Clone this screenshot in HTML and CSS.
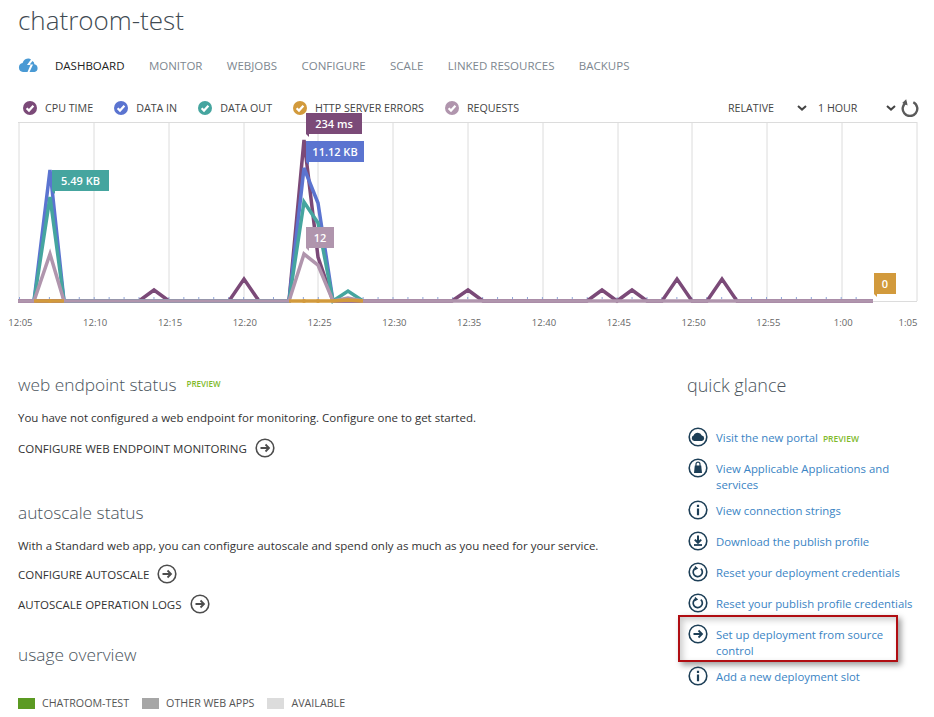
FILE: index.html
```html
<!DOCTYPE html>
<html lang="en">
  <head>
    <meta charset="UTF-8" />
    <title>chatroom-test</title>
    <link rel="stylesheet" href="styles.css">
  </head>
  <body>
    <svg width="0" height="0" class="defs">
      <symbol id="i-arrow" viewBox="0 0 20 20">
        <circle cx="10" cy="10" r="8.8" fill="none" stroke="currentColor" stroke-width="1.6"/>
        <path d="M5.5 10H14M10.5 6.5L14 10L10.5 13.5" fill="none" stroke="currentColor" stroke-width="1.8"/>
      </symbol>
      <symbol id="i-check" viewBox="0 0 14 14">
        <path d="M3.6 7.2L6 9.6L10.4 4.8" fill="none" stroke="#fff" stroke-width="2.2"/>
      </symbol>
      <symbol id="i-info" viewBox="0 0 20 20">
        <circle cx="10" cy="10" r="8.8" fill="none" stroke="currentColor" stroke-width="1.6"/>
        <path d="M8.9 4.8h2.2v2.2H8.9zM8.9 8.4h2.2v6.8H8.9z" fill="currentColor"/>
      </symbol>
      <symbol id="i-reset" viewBox="0 0 20 20">
        <circle cx="10" cy="10" r="8.8" fill="none" stroke="currentColor" stroke-width="1.6"/>
        <path d="M12.8 6.6A4.6 4.6 0 1 1 7.6 6" fill="none" stroke="currentColor" stroke-width="1.7"/>
        <path d="M7 3.8L10.2 6.6L6.4 8.4z" fill="currentColor"/>
      </symbol>
    </svg>

    <h1 class="title">chatroom-test</h1>

    <nav class="tabs">
      <svg class="cloud" width="21" height="16" viewBox="0 0 21 16">
        <path d="M5 15A4.5 4.5 0 0 1 4.6 6.1A5.5 5.5 0 0 1 13 2.4L9 8H12.5L9.5 15zM14.5 4A4 4 0 0 1 16.4 7.2A4 4 0 0 1 16.5 15H11.5L15 7.5H11.7z" fill="#4a9ad4"/>
      </svg>
      <a class="tab active">DASHBOARD</a>
      <a class="tab">MONITOR</a>
      <a class="tab">WEBJOBS</a>
      <a class="tab">CONFIGURE</a>
      <a class="tab">SCALE</a>
      <a class="tab">LINKED RESOURCES</a>
      <a class="tab">BACKUPS</a>
    </nav>

    <div class="legend">
      <span class="metric"><svg class="dot cpu"><use href="#i-check"/></svg>CPU TIME</span>
      <span class="metric"><svg class="dot data-in"><use href="#i-check"/></svg>DATA IN</span>
      <span class="metric"><svg class="dot data-out"><use href="#i-check"/></svg>DATA OUT</span>
      <span class="metric"><svg class="dot errors"><use href="#i-check"/></svg>HTTP SERVER ERRORS</span>
      <span class="metric"><svg class="dot requests"><use href="#i-check"/></svg>REQUESTS</span>
      <div class="range">
        <span class="select select-relative">RELATIVE<svg class="chev" viewBox="0 0 10 6"><path d="M1 1L5 4.6L9 1" fill="none" stroke="#444" stroke-width="2"/></svg></span>
        <span class="select select-hour">1 HOUR<svg class="chev" viewBox="0 0 10 6"><path d="M1 1L5 4.6L9 1" fill="none" stroke="#444" stroke-width="2"/></svg></span>
        <svg class="refresh" width="18" height="18" viewBox="0 0 18 18">
          <path d="M12.3 3.2A7.3 7.3 0 1 1 5.7 3.2" fill="none" stroke="#5a5a5a" stroke-width="2.4"/>
          <path d="M5.2 0.2L6.6 6.4L1.2 4z" fill="#5a5a5a"/>
        </svg>
      </div>
    </div>

    <div class="chart">
      <svg class="plot" width="900" height="184" viewBox="0 0 900 184">
        <path d="M1 0V179M76 0V179M151 0V179M226 0V179M300 0V179M375 0V179M450 0V179M525 0V179M600 0V179M674 0V179M749 0V179M824 0V179M899 0V179M0 .5H899M0 179.5H899" stroke="#dcdcdc" fill="none"/>
        <line class="ticks" x1="1" y1="176" x2="840" y2="176"/>
        <polyline class="line l-cpu" points="0,179 121,179 136,168 151,179 211,179 226,157 241,179 271,179 286,18 300,135 315,179 434,179 450,168 465,179 569,179 584,168 599,179 614,168 629,179 644,179 659,157 674,179 689,179 704,157 719,179 855,179"/>
        <polyline class="line l-in" points="16,179 32,48 46,179 271,179 286,46 300,81 315,179"/>
        <polyline class="line l-out" points="16,179 32,75 46,179 271,179 286,80 300,101 315,179 330,169 345,179"/>
        <polyline class="line l-req" points="0,179 16,179 32,132 46,179 271,179 286,132 300,143 315,179 330,176 345,179 855,179"/>
        <polyline class="line l-err" points="16,179 46,179"/>
        <polyline class="line l-err" points="271,179 315,179 330,178 345,179"/>
        <circle class="err-dot" cx="32" cy="179" r="2"/>
        <circle class="err-dot" cx="286" cy="179" r="2"/>
        <circle class="err-dot" cx="300" cy="179" r="2"/>
        <circle class="err-dot" cx="330" cy="178" r="2"/>
      </svg>
      <span class="tag tag-cpu">234 ms</span>
      <span class="tag tag-in">11.12 KB</span>
      <span class="tag tag-out">5.49 KB</span>
      <span class="tag tag-req">12</span>
      <span class="tag tag-err">0</span>
    </div>

    <div class="axis">
      <span>12:05</span><span>12:10</span><span>12:15</span><span>12:20</span><span>12:25</span><span>12:30</span><span>12:35</span><span>12:40</span><span>12:45</span><span>12:50</span><span>12:55</span><span>1:00</span><span class="axis-last">1:05</span>
    </div>

    <div class="columns">
      <div class="main">
        <section class="block">
          <h2>web endpoint status<sup class="preview">PREVIEW</sup></h2>
          <p>You have not configured a web endpoint for monitoring. Configure one to get started.</p>
          <a class="action">CONFIGURE WEB ENDPOINT MONITORING<svg class="go"><use href="#i-arrow"/></svg></a>
        </section>
        <section class="block autoscale">
          <h2>autoscale status</h2>
          <p>With a Standard web app, you can configure autoscale and spend only as much as you need for your service.</p>
          <a class="action">CONFIGURE AUTOSCALE<svg class="go"><use href="#i-arrow"/></svg></a>
          <a class="action">AUTOSCALE OPERATION LOGS<svg class="go"><use href="#i-arrow"/></svg></a>
        </section>
        <section class="block usage">
          <h2>usage overview</h2>
          <div class="usage-legend">
            <span class="usage-key"><i class="swatch swatch-app"></i>CHATROOM-TEST</span>
            <span class="usage-key"><i class="swatch swatch-other"></i>OTHER WEB APPS</span>
            <span class="usage-key"><i class="swatch swatch-free"></i>AVAILABLE</span>
          </div>
        </section>
      </div>

      <aside class="glance">
        <h2>quick glance</h2>
        <ul class="links">
          <li>
            <svg class="ico" viewBox="0 0 20 20">
              <circle cx="10" cy="10" r="8.8" fill="none" stroke="currentColor" stroke-width="1.6"/>
              <path d="M6.2 14A2.8 2.8 0 0 1 5.6 8.6A4.4 4.4 0 0 1 13.8 8.5A2.8 2.8 0 0 1 14 14z" fill="currentColor"/>
            </svg>
            <a>Visit the new portal<b class="preview">PREVIEW</b></a>
          </li>
          <li>
            <svg class="ico" viewBox="0 0 20 20">
              <circle cx="10" cy="10" r="8.8" fill="none" stroke="currentColor" stroke-width="1.6"/>
              <path d="M6.8 7.5H13.2L14 15H6z" fill="currentColor"/>
              <path d="M8 8V6.2A2 2 0 0 1 12 6.2V8" fill="none" stroke="currentColor" stroke-width="1.2"/>
            </svg>
            <a>View Applicable Applications and services</a>
          </li>
          <li><svg class="ico"><use href="#i-info"/></svg><a>View connection strings</a></li>
          <li>
            <svg class="ico" viewBox="0 0 20 20">
              <circle cx="10" cy="10" r="8.8" fill="none" stroke="currentColor" stroke-width="1.6"/>
              <path d="M10 4.5V11.5M6.8 8.6L10 11.8L13.2 8.6" fill="none" stroke="currentColor" stroke-width="2"/>
              <path d="M6 14H14" stroke="currentColor" stroke-width="1.8"/>
            </svg>
            <a>Download the publish profile</a>
          </li>
          <li><svg class="ico"><use href="#i-reset"/></svg><a>Reset your deployment credentials</a></li>
          <li><svg class="ico"><use href="#i-reset"/></svg><a>Reset your publish profile credentials</a></li>
          <li class="marked"><svg class="ico"><use href="#i-arrow"/></svg><a>Set up deployment from source control</a></li>
          <li><svg class="ico"><use href="#i-info"/></svg><a>Add a new deployment slot</a></li>
        </ul>
        <h3 class="status">STATUS</h3>
      </aside>
    </div>
  </body>
</html>
```

FILE: styles.css
```css
html {
  overflow: hidden;
}

body {
  font-family: "Open Sans", "Liberation Sans", sans-serif;
  font-size: 11.5px;
  margin: 0;
  padding: 0 0 0 18px;
  background: #fff;
  color: #333;
  height: 717px;
  overflow: hidden;
}

.defs {
  position: absolute;
}

.title {
  font-size: 26px;
  font-weight: 300;
  line-height: 36px;
  margin: 0;
  padding-top: 2px;
  color: #3f4a52;
}

.tabs {
  display: flex;
  align-items: center;
  height: 20px;
  margin-top: 17px;
}

.cloud {
  margin-right: 16px;
}

.tab {
  margin-right: 24.4px;
  color: #7d8790;
}

.tab.active {
  color: #222;
}

.legend {
  display: flex;
  align-items: center;
  height: 20px;
  margin-top: 23px;
  padding-left: 5px;
  font-size: 10.7px;
  color: #444;
}

.metric {
  display: flex;
  align-items: center;
  margin-right: 21px;
}

.dot {
  width: 14px;
  height: 14px;
  border-radius: 50%;
  margin-right: 8px;
}

.cpu { background: #7b4a78; }
.data-in { background: #5b74d0; }
.data-out { background: #45a59f; }
.errors { background: #d29a3c; }
.requests { background: #b095ad; }

.range {
  display: flex;
  align-items: center;
  margin-left: auto;
  margin-right: 15px;
}

.select {
  display: flex;
  align-items: center;
  justify-content: space-between;
}

.select-relative {
  width: 79px;
  margin-right: 11px;
}

.select-hour {
  width: 78px;
}

.chev {
  width: 10px;
  height: 6px;
}

.refresh {
  margin-left: 5px;
}

.chart {
  position: relative;
  width: 900px;
  height: 184px;
  margin-top: 4px;
}

.plot {
  display: block;
  overflow: visible;
}

.ticks {
  stroke: #8ea4d8;
  stroke-width: 2;
  stroke-dasharray: 1 13.94;
}

.line {
  fill: none;
  stroke-width: 3.5;
}

.l-cpu { stroke: #7b4a78; }
.l-in { stroke: #5b74d0; }
.l-out { stroke: #45a59f; }
.l-req { stroke: #b095ad; }
.l-err { stroke: #d29a3c; }

.err-dot {
  fill: #d29a3c;
}

.tag {
  position: absolute;
  box-sizing: border-box;
  height: 21px;
  line-height: 21px;
  color: #fff;
  font-size: 11px;
  font-weight: 600;
  text-align: center;
  white-space: nowrap;
}

.tag::after {
  content: "";
  position: absolute;
  left: 0;
  top: 100%;
  border-style: solid;
  border-width: 3px 0 0 3px;
  border-color: inherit;
  border-left-color: transparent;
}

.tag-cpu {
  left: 288px;
  top: -9px;
  width: 56px;
  background: #7b4a78;
  border-color: #7b4a78 transparent;
}

.tag-in {
  left: 288px;
  top: 19px;
  width: 58px;
  background: #5b74d0;
  border-color: #5b74d0 transparent;
}

.tag-out {
  left: 34px;
  top: 48px;
  width: 57px;
  background: #45a59f;
  border-color: #45a59f transparent;
}

.tag-req {
  left: 288px;
  top: 105px;
  width: 28px;
  background: #b095ad;
  border-color: #b095ad transparent;
}

.tag-err {
  left: 856px;
  top: 151px;
  width: 22px;
  background: #d29a3c;
  border-color: #d29a3c transparent;
}

.axis {
  display: flex;
  margin: 9px 0 0 -35px;
  line-height: 16px;
  font-size: 9.5px;
  color: #666;
  white-space: nowrap;
}

.axis span {
  flex: 0 0 74.8px;
  text-align: center;
}

.axis .axis-last {
  margin-left: -10px;
}

.columns {
  display: flex;
  margin-top: 42px;
}

.main {
  width: 669px;
}

.block {
  margin-bottom: 43px;
}

h2 {
  font-size: 17.3px;
  font-weight: 300;
  line-height: 24px;
  margin: 0;
  color: #4a545c;
}

.preview {
  font-size: 8px;
  font-weight: 600;
  color: #7fba2c;
  margin-left: 10px;
}

h2 .preview {
  vertical-align: 4px;
  line-height: 0;
}

.block p {
  margin: 12px 0 11px;
  line-height: 18px;
}

.action {
  display: flex;
  align-items: center;
  height: 20px;
  margin-top: 10px;
  color: #333;
}

.autoscale {
  margin-bottom: 29px;
}

.autoscale p {
  margin-bottom: -1px;
}

.go {
  width: 20px;
  height: 20px;
  margin-left: 8px;
  color: #4d4d4d;
}

.usage-legend {
  display: flex;
  margin-top: 29px;
}

.usage-key {
  display: flex;
  align-items: center;
  margin-right: 13px;
  font-size: 10.7px;
  color: #555;
}

.swatch {
  width: 17px;
  height: 11px;
  margin-right: 7px;
}

.swatch-app { background: #5b9a22; }
.swatch-other { background: #a6a6a6; }
.swatch-free { background: #dcdcdc; }

.glance {
  width: 230px;
}

.glance h2 {
  font-size: 18px;
}

.links {
  list-style: none;
  margin: 30px 0 0;
  padding: 0;
  display: flex;
  flex-direction: column;
  gap: 11px;
}

.links li {
  display: flex;
  align-items: flex-start;
  position: relative;
}

.ico {
  flex: 0 0 20px;
  width: 20px;
  height: 20px;
  margin: 0 8px 0 1px;
  color: #1d3f57;
}

.links a {
  margin: 3px 0 -4px;
  line-height: 16px;
  font-size: 11.35px;
  color: #3a84c4;
}

.links .preview {
  font-size: 8.5px;
  margin-left: 5px;
}

.marked::after {
  content: "";
  position: absolute;
  left: -9px;
  top: -9px;
  width: 216px;
  height: 43px;
  border: 2px solid #b00d12;
  box-shadow: 3px 3px 6px rgba(0, 0, 0, 0.4), inset 3px 3px 6px rgba(0, 0, 0, 0.2);
}

.status {
  font-size: 11px;
  font-weight: 400;
  margin: 27px 0 0;
  color: #444;
}
```
